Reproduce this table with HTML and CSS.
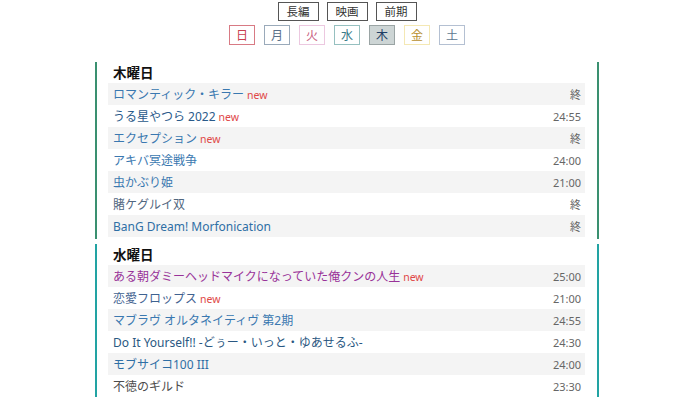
FILE: index.html
```html
<!DOCTYPE html>
<html lang="ja">
<head>
<meta charset="utf-8">
<title>番組表</title>
<link rel="stylesheet" href="styles.css">
</head>
<body>
<div class="page">
  <nav class="nav-top">
    <span class="btn">長編</span>
    <span class="btn">映画</span>
    <span class="btn">前期</span>
  </nav>
  <nav class="nav-days">
    <span class="day d-sun">日</span>
    <span class="day d-mon">月</span>
    <span class="day d-tue">火</span>
    <span class="day d-wed">水</span>
    <span class="day d-thu active">木</span>
    <span class="day d-fri">金</span>
    <span class="day d-sat">土</span>
  </nav>

  <section class="block b-thu">
    <h2 class="block-title">木曜日</h2>
    <div class="row"><span class="title c-blue">ロマンティック・キラー<span class="new">new</span></span><span class="time">終</span></div>
    <div class="row"><span class="title c-navy">うる星やつら 2022<span class="new">new</span></span><span class="time">24:55</span></div>
    <div class="row"><span class="title c-blue">エクセプション<span class="new">new</span></span><span class="time">終</span></div>
    <div class="row"><span class="title c-blue">アキバ冥途戦争</span><span class="time">24:00</span></div>
    <div class="row"><span class="title c-blue">虫かぶり姫</span><span class="time">21:00</span></div>
    <div class="row"><span class="title c-slate">賭ケグルイ双</span><span class="time">終</span></div>
    <div class="row"><span class="title c-blue2">BanG Dream! Morfonication</span><span class="time">終</span></div>
  </section>

  <section class="block b-wed">
    <h2 class="block-title">水曜日</h2>
    <div class="row"><span class="title c-purple">ある朝ダミーヘッドマイクになっていた俺クンの人生<span class="new">new</span></span><span class="time">25:00</span></div>
    <div class="row"><span class="title c-indigo">恋愛フロップス<span class="new">new</span></span><span class="time">21:00</span></div>
    <div class="row"><span class="title c-blue">マブラヴ オルタネイティヴ 第2期</span><span class="time">24:55</span></div>
    <div class="row"><span class="title c-deep">Do It Yourself!! -どぅー・いっと・ゆあせるふ-</span><span class="time">24:30</span></div>
    <div class="row"><span class="title c-blue2">モブサイコ100 III</span><span class="time">24:00</span></div>
    <div class="row"><span class="title c-gray">不徳のギルド</span><span class="time">23:30</span></div>
  </section>
</div>
</body>
</html>
```

FILE: styles.css
```css
html, body {
  margin: 0;
  padding: 0;
  background: #ffffff;
}

body {
  font-family: "Noto Sans", "Noto Sans CJK JP", sans-serif;
  font-size: 12px;
  color: #333;
}

.page {
  width: 694px;
  padding-top: 2px;
}

.nav-top,
.nav-days {
  display: flex;
  justify-content: center;
}

.nav-top {
  gap: 8px;
}

.nav-days {
  gap: 9px;
  margin-top: 4px;
}

.btn {
  display: block;
  box-sizing: border-box;
  height: 19px;
  line-height: 17px;
  padding: 0 8px;
  border: 1px solid #555;
  color: #333;
  font-size: 11.5px;
  font-family: "Noto Sans CJK JP", sans-serif;
}

.day {
  display: block;
  box-sizing: border-box;
  width: 26px;
  height: 20px;
  line-height: 18px;
  text-align: center;
  border: 1px solid #999;
  font-size: 12px;
  font-family: "Noto Sans CJK JP", sans-serif;
}

.d-sun { border-color: #d87a84; color: #c84050; }
.d-mon { border-color: #9aaaba; color: #5a7088; }
.d-tue { border-color: #ecc8e0; color: #c86080; }
.d-wed { border-color: #96c0c0; color: #3a7a88; }
.d-thu { border-color: #9aa4a4; color: #1f3f66; }
.d-thu.active { background: #cdd5d5; }
.d-fri { border-color: #f4e8b4; color: #b89030; }
.d-sat { border-color: #b4c0d2; color: #607890; }

.block {
  box-sizing: border-box;
  width: 504px;
  margin-left: 95px;
  padding: 0 12px 2px 11px;
  border-left: 2px solid #3a9070;
  border-right: 2px solid #3a9070;
}

.b-thu {
  margin-top: 17px;
}

.b-wed {
  margin-top: 5px;
  border-color: #22a3a3;
}

.block-title {
  margin: 0;
  height: 21px;
  line-height: 20px;
  padding-left: 5px;
  font-size: 13.5px;
  font-weight: bold;
  color: #111;
  font-family: "Noto Sans CJK JP", sans-serif;
}

.row {
  display: flex;
  justify-content: space-between;
  align-items: center;
  height: 22px;
  padding: 0 4px 0 5px;
}

.row:nth-of-type(odd) {
  background: #f4f4f4;
}

.title {
  font-size: 12px;
  white-space: nowrap;
}

.new {
  margin-left: 3px;
  font-size: 10.5px;
  color: #e04848;
}

.time {
  font-size: 11px;
  color: #666;
}

.c-blue { color: #3a78b0; }
.c-blue2 { color: #2f6fa5; }
.c-navy { color: #2a5a8a; }
.c-slate { color: #52677f; }
.c-purple { color: #993399; }
.c-indigo { color: #3f6290; }
.c-deep { color: #2a5882; }
.c-gray { color: #4c4c4c; }
```
